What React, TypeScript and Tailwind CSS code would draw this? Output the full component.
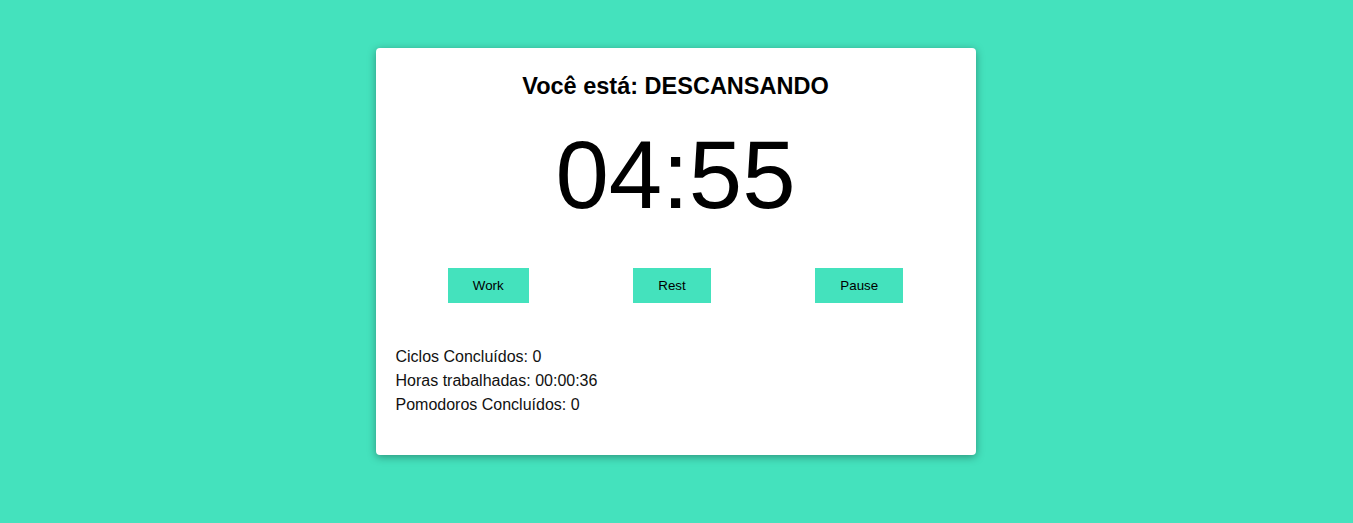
export default function App() {
  const buttons = ["Work", "Rest", "Pause"];

  return (
    <div className="min-h-screen w-full bg-[#44e2bd] pt-[48px] font-['Liberation_Sans',Arial,sans-serif]">
      <div className="mx-auto w-[600px] -translate-x-px rounded-[4px] bg-white px-[20px] pt-[24px] pb-[38px] shadow-[0_2px_8px_rgba(0,0,0,0.35)]">
        <h1 className="text-center text-[23.5px] leading-[28px] font-bold text-black">
          Você está: DESCANSANDO
        </h1>

        <div className="mt-[27px] text-center text-[96px] leading-[96px] text-black">
          04:55
        </div>

        <div className="mt-[45px] flex justify-around">
          {buttons.map((label) => (
            <button
              key={label}
              className="h-[35px] bg-[#44e2bd] px-[25px] text-[13.33px] text-black"
            >
              {label}
            </button>
          ))}
        </div>

        <div className="mt-[42px] text-[16px] leading-[24px] text-[#111]">
          <p>Ciclos Concluídos: 0</p>
          <p>Horas trabalhadas: 00:00:36</p>
          <p>Pomodoros Concluídos: 0</p>
        </div>
      </div>
    </div>
  );
}
